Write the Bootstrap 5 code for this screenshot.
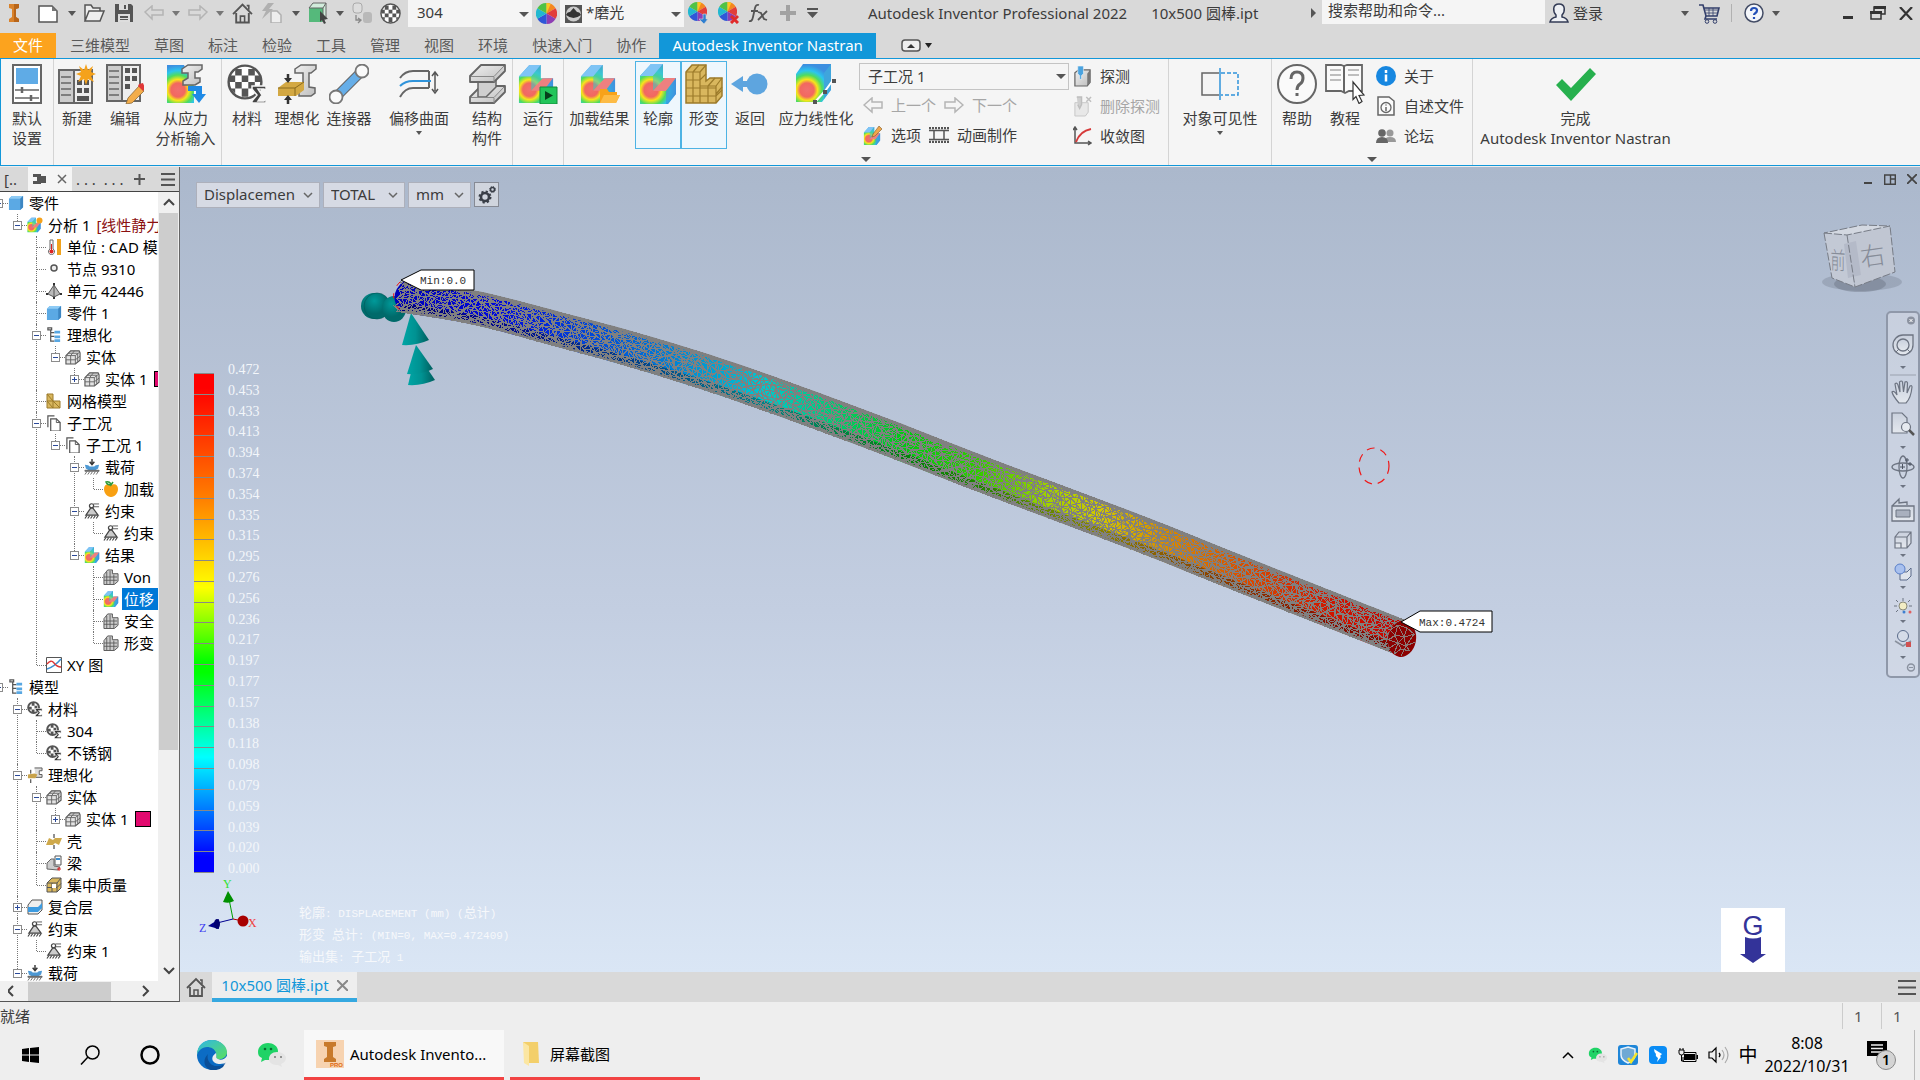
<!DOCTYPE html>
<html lang="zh-CN">
<head>
<meta charset="utf-8">
<meta name="viewport" content="width=device-width, initial-scale=1">
<title>Autodesk Inventor Professional 2022</title>
<link href="https://cdn.jsdelivr.net/npm/bootstrap@5.3.0/dist/css/bootstrap.min.css" rel="stylesheet">
<style>
:root{--accent:#1297d9;--chrome:#d9d9d9;--ink:#3c3c3c;--ui:"Noto Sans","Noto Sans CJK SC",sans-serif}
body{font-family:var(--ui);font-size:15px;line-height:20px;color:var(--ink);background:#eee;height:100vh;overflow:hidden}
button{font:inherit;color:inherit;background:none;border:0;padding:0}
select,input{font:inherit;color:inherit;appearance:none;border:0;background:none;border-radius:0;outline:0}
svg{display:block;flex:none}
a{color:inherit;text-decoration:none}
.cw16{width:16px}.cw28{width:28px}.cw32{width:32px}.cw36{width:36px}
.cell{display:flex;align-items:center;justify-content:center;flex:none;height:26px}
.caret{width:0;height:0;border:4px solid transparent;border-top:5px solid #555;border-bottom:0;flex:none}
.caret-r{width:0;height:0;border:5px solid transparent;border-left:5px solid #555;border-right:0}
.titlebar{height:33px;background:var(--chrome)}
.qbox{height:27px;width:124px;background:#f5f5f5;position:relative}
.qbox select{width:100%;height:100%;padding:0 22px 3px 9px}
.qbox .caret{position:absolute;right:3px;top:12px;border-width:5px 5px 0}
.qbox .ballpic{position:absolute;left:5px;top:5px}
.qbox .ballpic + select{padding-left:26px}
.search{height:24px;width:223px;background:#f5f5f5;padding:0 6px 4px}
.search::placeholder{color:var(--ink);opacity:1}
.tabs{height:25px;background:var(--chrome)}
.tabs a{color:#595959;height:25px;line-height:25px;margin-right:24px}
.tabs .filetab{background:#fca31e;color:#fff;width:56px;text-align:center;margin-right:14px}
.tabs .livetab{background:var(--accent);color:#fff;width:217px;text-align:center;margin:0 25px 0 -11px}
.ribbon{height:108px;background:#f5f5f5;border:1px solid var(--accent);border-right:0;flex:none}
.grp{border-right:1px solid #d4d4d4;position:relative;display:flex;flex:none}
.grp:last-child{border:0}
.big{display:flex;flex-direction:column;align-items:center;margin-top:2px;height:88px;border:1px solid transparent;padding-top:2px;text-align:center;white-space:nowrap;flex:none}
.big svg{height:40px;margin-bottom:4px}
.big .caret{margin-top:3px;border-width:4px 3px 0}
.big.on{border-color:#4db3e4;background:#eef7fd}
.bw46{width:46px}.bw50{width:50px}.bw52{width:52px}.bw54{width:54px}.bw71{width:71px}.bw86{width:86px}.bw102{width:102px}.bw197{width:197px}
.more{position:absolute;bottom:3px;left:50%;margin-left:-5px;border-width:5px 5px 0}
.stack{display:flex;flex-direction:column;padding-top:4px}
.stack.trio{padding-top:2px}
.tool{display:flex;align-items:center;gap:8px;height:30px;white-space:nowrap}
.tool.off,.off .tool{color:#a6a6a6}
.case{width:210px;height:27px;border:1px solid #c4c4c4;position:relative}
.case select{width:100%;height:25px;padding:0 20px 2px 8px}
.case .caret{position:absolute;right:2px;top:10px;border-width:5px 5px 0}
.main{flex:1 1 0;min-height:0;margin-top:1px}
.side{width:180px;border-right:1px solid #666;background:#f0f0f0;flex:none;display:flex;flex-direction:column;border-bottom:1px solid #555}
.sidehead{height:25px;background:var(--chrome);border-bottom:1px solid #444;flex:none;display:flex;align-items:center;overflow:hidden}
.sidehead .live{background:#f5f5f5;width:44px;height:24px;display:flex;align-items:center;justify-content:space-around}
.treebox{flex:1 1 0;min-height:0}
.treeview{width:158px;background:#fff;overflow:hidden;color:#000}
.tree,.tree ul{list-style:none;margin:0;padding:0}
.tree{margin-left:-11px;width:400px}
.tree ul{padding-left:19px}
.tree li{position:relative}
.tree li li::before{content:"";position:absolute;left:9px;top:0;bottom:0;border-left:1px dotted #777}
.tree li li:last-child::before{bottom:auto;height:11px}
.trow{display:flex;align-items:center;height:22px;position:relative;white-space:nowrap}
.trow::before{content:"";position:absolute;left:10px;width:9px;top:11px;border-top:1px dotted #777}
.trow > svg{margin:0 3px 0 19px}
.trow > span{padding:0 2px;line-height:22px}
.twist{position:absolute;left:5px;top:7px;width:9px;height:9px;border:1px solid #8c8c8c;background:#fff;z-index:1}
.twist::before,.twist.plus::after{content:"";position:absolute;left:1px;top:3px;width:5px;height:1px;background:#2b4a9a}
.twist.plus::after{left:3px;top:1px;width:1px;height:5px}
.trow > .picked{background:#0078d7;color:#fff;width:60px}
.trow > .kind{color:#8b1010;padding:0}
.swatch{width:16px;height:16px;background:#e20a6f;border:1px solid #000;margin-left:5px}
.vbar{width:21px;background:#f0f0f0;display:flex;flex-direction:column;align-items:center}
.vthumb{background:#cdcdcd;width:19px;flex:0 0 68%}
.hbar{height:20px;display:flex;align-items:center;width:158px;flex:none}
.hthumb{width:83px;height:19px;background:#cdcdcd}
.view{flex:1 1 0;min-height:0;position:relative;overflow:hidden;background:linear-gradient(#abb8cc,#c3cee1 55%,#dae6f5)}
.scene{position:absolute;left:0;top:0}
.serifmono{font-family:"Liberation Mono","Noto Sans CJK SC",monospace}
.picks{position:absolute;left:16px;top:15px;display:flex;gap:3px}
.pick{position:relative;height:26px;border:1px solid #adb0bb;background:#d6dae4}
.pick select{width:100%;height:24px;padding:0 18px 2px 7px}
.pick svg{position:absolute;right:6px;top:7px}
.pw124{width:124px}.pw82{width:82px}.pw63{width:63px}
.gearbtn{width:25px;height:25px;border:1px solid #868a94;background:#d0d5de;display:flex;align-items:center;justify-content:center}
.legend{position:absolute;left:14px;top:193px;display:flex;gap:14px}
.ramp{width:20px;height:500px;margin-top:13px;border-bottom:1px solid #888;background:repeating-linear-gradient(#888 0 1px,transparent 1px calc(100%/24)),linear-gradient(#f00 3%,#ff7e00 25%,#ff0 43%,#0f0 58%,#0f0 60%,#0ff 77%,#00f 97%)}
.legend ol{list-style:none;margin:0;padding:0;height:520px;display:flex;flex-direction:column;color:#f3f6fa;font:14px/20px "Liberation Serif",serif}
.legend li{flex:1}
.notes{position:absolute;left:119px;bottom:3px;color:#f6f8fb;font-size:11px;line-height:22px}
.notes b{font-weight:400;font-size:13px}
.notes p{margin:0;height:22px;white-space:pre}
.triad{position:absolute;left:15px;bottom:36px}
.gbox{position:absolute;right:135px;bottom:0}
.mdi{position:absolute;right:0;top:-1px;display:flex}
.vcube{position:absolute;right:8px;top:50px}
.navtools{position:absolute;right:0;top:144px;width:34px;height:367px;border:2px solid #8f98a9;border-radius:5px;background:rgba(214,218,230,.6);display:flex;flex-direction:column;align-items:center;padding-top:3px}
.navtools .caret{border-width:3px 3px 0;border-top-color:#6d7482}
.navtools .step{height:14px;display:flex;align-items:center}
.navtools .tight{height:11px}
.docbar{height:30px;background:var(--chrome);flex:none;display:flex}
.doctab{width:145px;background:#eee;border-bottom:4px solid #35a8e0;color:var(--accent);display:flex;align-items:center;justify-content:center;gap:8px}
.status{height:28px;flex:none;display:flex;align-items:center}
.status .num{width:39px;border-left:1px solid #ccc;height:26px;line-height:26px;padding-left:11px;color:#555}
.taskbar{height:50px;flex:none;display:flex;color:#000;white-space:nowrap}
.tcell{width:60px;display:flex;align-items:center;justify-content:center}
.task{display:flex;align-items:center;border-bottom:3px solid #f24343;gap:6px;padding:0 0 0 12px}
.task.front{background:#f8f8f8;width:200px}
.task.back{width:190px;gap:10px;margin-left:6px}
.tray{display:flex;align-items:center}
.tray .slot{width:30px;display:flex;justify-content:center}
.ime{font-size:19px}
.clock{width:88px;text-align:center;font-size:16px;line-height:23px}
.peek{width:18px;border-right:1px solid #bbb;margin-right:5px}
</style>
<script src="https://cdn.jsdelivr.net/npm/bootstrap@5.3.0/dist/js/bootstrap.bundle.min.js"></script>
</head>
<body class="d-flex flex-column">

<svg width="0" height="0" class="position-absolute" aria-hidden="true">
<defs>
<radialGradient id="heat" gradientUnits="userSpaceOnUse" cx="12" cy="26" r="25"><stop offset="0" stop-color="#f06f6f"/><stop offset=".28" stop-color="#f2685f"/><stop offset=".42" stop-color="#f7e51b"/><stop offset=".6" stop-color="#4fdc5e"/><stop offset=".78" stop-color="#2cc5ee"/><stop offset="1" stop-color="#3d8fe0"/></radialGradient>
<linearGradient id="steel" x1="0" y1="0" x2="1" y2="1"><stop offset="0" stop-color="#f1f1f1"/><stop offset="1" stop-color="#bdbdbd"/></linearGradient>
<linearGradient id="teal" x1="0" x2="1"><stop offset="0" stop-color="#00a5a5"/><stop offset=".5" stop-color="#009292"/><stop offset="1" stop-color="#005e5e"/></linearGradient>
<radialGradient id="tealball" cx=".4" cy=".3"><stop offset="0" stop-color="#009a9a"/><stop offset="1" stop-color="#006a6a"/></radialGradient>
<linearGradient id="glass" x1="0" y1="0" x2="0" y2="1"><stop offset="0" stop-color="#c9d0dd"/><stop offset="1" stop-color="#e4e8ee"/></linearGradient>
<linearGradient id="edgeA" x1="0" y1="0" x2="1" y2="1"><stop offset="0" stop-color="#2fb6e8"/><stop offset="1" stop-color="#5be05c"/></linearGradient>

<symbol id="fea" viewBox="0 0 38 40"><path d="M1 12 12 0H24V14H37V30L29 40H1Z" fill="url(#heat)"/><path d="M1 12 12 0H24L14 12Z" fill="#7fc4f5"/><path d="M14 12 24 0V16L14 27Z" fill="#43c8c0" opacity=".6"/><path d="M14 27 26 14H37L27 27Z" fill="#ee8080"/><path d="M27 27 37 14V30L29 40H27Z" fill="#3f93dc" opacity=".65"/></symbol>
<symbol id="ibeam" viewBox="0 0 38 40"><path d="M2 33 13 22H37V28L26 39H2Z" fill="url(#steel)" stroke="#666" stroke-width="1.800" stroke-linejoin="round"/><path d="M10 17 28 13V23L18 33H10Z" fill="#cfcfcf" stroke="#666" stroke-width="1.500"/><path d="M2 12 13 1H37V7L26 18H2Z" fill="url(#steel)" stroke="#666" stroke-width="1.800" stroke-linejoin="round"/><path d="M3 12.500H26L36 2M26 13V18M3 33.500H26L36 23M26 34V39" fill="none" stroke="#888"/></symbol>
<symbol id="ball" viewBox="0 0 22 22"><circle cx="11" cy="11" r="10" fill="#fff" stroke="#555" stroke-width="1.500"/><path d="M5 3h4v4H5zM13 3h4v4h-4zM9 7h4v4H9zM1.500 7H5v4H1.500zM17 7h4v4h-4zM5 11h4v4H5zM13 11h4v4h-4zM9 15h4v5H9zM2 15h3v3zM17 15h3l-3 3z" fill="#555"/></symbol>
<symbol id="material" viewBox="0 0 40 40"><use href="#ball" x="0" y="0" width="36" height="36"/><path d="M25 22h14v5l-2-2h-6l4 6-4 6h6l2-3v5H25v-2l5-6-5-6z" fill="#444" stroke="#f5f5f5" stroke-width="1.500"/></symbol>
<symbol id="mini-mat" viewBox="0 0 17 17"><circle cx="7" cy="7" r="5.800" fill="#fff" stroke="#555" stroke-width="2"/><path d="M5 2h3v3H5zM2 6h3v3H2zM8 5h3v3H8zM5 9h3v3H5z" fill="#555"/><path d="M9 8h7v3l-1-1h-3l2 2.500-2 2.500h3l1-1v2.500H9V15l3-2.500L9 9.500z" fill="#333" stroke="#fff" stroke-width=".6"/></symbol>
<symbol id="wheel" viewBox="-10 -10 20 20"><path d="M0 0V-10A10 10 0 0 1 8.700-5Z" fill="#f5871f"/><path d="M0 0 8.700-5A10 10 0 0 1 8.700 5Z" fill="#e23d3a"/><path d="M0 0 8.700 5A10 10 0 0 1 0 10Z" fill="#8e3db4"/><path d="M0 0V10A10 10 0 0 1-8.700 5Z" fill="#2f57d8"/><path d="M0 0-8.700 5A10 10 0 0 1-8.700-5Z" fill="#22b8d0"/><path d="M0 0-8.700-5A10 10 0 0 1 0-10Z" fill="#4fc244"/><path d="M0 0 4-9A10 10 0 0 0 0-10Z" fill="#f9c920"/></symbol>
<symbol id="home" viewBox="0 0 20 20"><path d="M1 11 10 2l9 9M4 10v9h12v-9" fill="none" stroke="#555" stroke-width="1.800"/><path d="M14 3h2v4M8 19v-6h4v6" fill="none" stroke="#555" stroke-width="1.500"/></symbol>
<symbol id="part" viewBox="0 0 17 17"><path d="M1 4 4 1h12v12l-3 3H1z" fill="#5ba9e4"/><path d="M1 4 4 1h12l-3 3z" fill="#8ecbf5"/><path d="m13 4 3-3v12l-3 3z" fill="#3d86c2"/></symbol>
<symbol id="mesh" viewBox="0 0 17 17"><path d="M1 7 6 2h9l1 2v8l-5 4H1z" fill="#e3e3e3" stroke="#555" stroke-width="1.200"/><path d="M1 7h10v9M1 11.500h10l5-4M6 7v9M11 7l5-4M3.500 4.500h10v9M6 7l4-5" fill="none" stroke="#666"/></symbol>
<symbol id="result" viewBox="0 0 17 17"><path d="M1 6 5 1h5v4h6v8l-4 3.500H1z" fill="#ccc" stroke="#555"/><path d="M1 8.500h14M1 12h14M4 3v13M7.500 2v14M11.500 6v10" stroke="#555" stroke-width=".9"/></symbol>
<symbol id="branch" viewBox="0 0 17 17"><path d="M2 1h4v2H2zM5 3v12h4M5 6h4M5 10h4" fill="none" stroke="#555" stroke-width="1.300"/><path d="M9 4h6v3H9zM9 9h6v3H9zM9 13h6v3H9z" fill="#58a7e2"/></symbol>
<symbol id="pages" viewBox="0 0 17 17"><path d="M2 13V1h7M5 4h6l4 4v9H5z" fill="#fff" stroke="#555" stroke-width="1.300"/><path d="M11 4v4h4" fill="none" stroke="#555"/></symbol>
<symbol id="load" viewBox="0 0 17 17"><path d="M8.500 0v5M6 3l2.500 3L11 3" fill="none" stroke="#333" stroke-width="1.500"/><path d="M1 6q4 0 5 2h5q1-2 5-2l-1 4-3 2H5l-3-2z" fill="#4c98d4"/><path d="M1 12h15v1H1zM1 16.500l2-3m1 3 2-3m1 3 2-3m1 3 2-3m1 3 2-3" stroke="#666" fill="#666"/></symbol>
<symbol id="fix" viewBox="0 0 17 17"><circle cx="8" cy="3" r="2.200" fill="#fff" stroke="#444" stroke-width="1.300"/><path d="M10 1h6M10 4h6" stroke="#555"/><path d="M7 5.500 2 13h13L9.500 5.500z" fill="#ccc" stroke="#444" stroke-width="1.300"/><path d="m1 16.500 2-3m1 3 2-3m1 3 2-3m1 3 2-3m1 3 2-3" stroke="#444" stroke-width="1.200"/></symbol>
<symbol id="ideal" viewBox="0 0 17 17"><path d="M8 1h8v3h-3v4h3v3H9" fill="#ddd" stroke="#555"/><path d="M1 8 8 7l3 1-2 4H1z" fill="#c8a24a"/><path d="M4 3v4M4 17v-4" stroke="#222"/></symbol>
<symbol id="doc" viewBox="0 0 20 20"><path d="M1 3h13l5 5v11H1z" fill="#fff" stroke="#555" stroke-width="1.500"/><path d="M14 3v5h5z" fill="#777"/></symbol>
<symbol id="wechat" viewBox="0 0 30 26"><path d="M11 1C5 1 1 5 1 10c0 3 1 5 4 6l-1 4 4-2h4c5 0 9-4 9-9s-5-8-10-8z" fill="#1fd366"/><path d="M20 10c-5 0-8 3-8 7 0 4 4 6 9 6l4 2-1-3c3-1 5-3 5-6 0-3-4-6-9-6z" fill="#e4e4e4"/><circle cx="8" cy="7" r="1.300" fill="#0a6a32"/><circle cx="14" cy="7" r="1.300" fill="#0a6a32"/><circle cx="18" cy="15" r="1" fill="#777"/><circle cx="24" cy="15" r="1" fill="#777"/></symbol>
<symbol id="chev" viewBox="0 0 10 10"><path d="m1 3 4 4 4-4" fill="none" stroke="#666" stroke-width="1.500"/></symbol>
<symbol id="probe" viewBox="0 0 20 22"><path d="M2 7 6 4h12v13l-3 4H2z" fill="url(#steel)" stroke="#666" stroke-width="1.300"/><path d="m15 8 3-4v13l-3 4z" fill="#777"/><path d="M5 0h6v8l-2 2v4H7v-4L5 8z" fill="#4aa3e0" stroke="#f5f5f5" stroke-width=".6"/></symbol>
</defs>
</svg>

<header class="titlebar d-flex align-items-start flex-shrink-0">
  <div class="cell cw28 me-1"><svg width="12" height="20" viewBox="0 0 12 20"><path d="M1 1h10v4L8 6v8l3 2v3H1v-3l3-2V6L1 5z" fill="#d9822b"/><path d="M8 6v8l3 2v3H6V1h5v4z" fill="#b8651a"/></svg></div>
  <button class="cell cw32" aria-label="新建"><svg width="20" height="20"><use href="#doc"/></svg></button><div class="cell cw16"><i class="caret"></i></div>
  <button class="cell cw28" aria-label="打开"><svg width="22" height="20" viewBox="0 0 22 20"><path d="M2 18V2h6l2 3h7v3M2 18 6 8h15l-4 10z" fill="#eee" stroke="#555" stroke-width="1.500"/></svg></button>
  <button class="cell cw32" aria-label="保存"><svg width="18" height="20" viewBox="0 0 18 20"><path d="M0 1h16l2 2v16H0z" fill="#555"/><path d="M4 1h9v6H4zM3 11h12v8H3z" fill="#ddd"/><path d="M9 2h2v4H9zM5 13h8v2H5zM5 16h8v1H5z" fill="#555"/></svg></button>
  <button class="cell cw28" aria-label="撤消"><svg width="20" height="16" viewBox="0 0 20 16"><path d="m1 7 7-6v4h11v5H8v4z" fill="none" stroke="#b4b4b4" stroke-width="1.500"/></svg></button><div class="cell cw16"><i class="caret opacity-75"></i></div>
  <button class="cell cw28" aria-label="重做"><svg width="20" height="16" viewBox="0 0 20 16"><path d="m19 7-7-6v4H1v5h11v4z" fill="none" stroke="#b4b4b4" stroke-width="1.500"/></svg></button><div class="cell cw16"><i class="caret opacity-75"></i></div>
  <button class="cell cw28" aria-label="主页"><svg width="21" height="22"><use href="#home"/></svg></button>
  <button class="cell cw32" aria-label="更新"><svg width="20" height="20" viewBox="0 0 20 20"><path d="M6 0h6L7 6h4L0 16 4 8H0z" fill="#b0b0b0"/><path d="M9 8h6l4 4v8H9z" fill="#eee" stroke="#b0b0b0" stroke-width="1.500"/></svg></button><div class="cell cw16"><i class="caret"></i></div>
  <button class="cell cw28" aria-label="选择"><svg width="21" height="22" viewBox="0 0 21 22"><path d="m1 6 4-5h13v14l-4 5H1z" fill="#55b97b"/><path d="m1 6 4-5h13l-3 5zM15 6v14l3-4V1" fill="#d2ecdc" stroke="#666"/><path d="m12 9 8 8-4 .5 2 3.500-2 1-2-4-2 2z" fill="#444"/></svg></button><div class="cell cw16"><i class="caret"></i></div>
  <div class="cell cw28"><svg width="20" height="22" viewBox="0 0 20 22"><rect x="1" y="1" width="9" height="10" rx="3" fill="#ddd" stroke="#aaa"/><rect x="11" y="10" width="9" height="11" rx="3" fill="#b9b9b9"/><path d="M4 13v5h4M6 16l3 2-3 3" fill="none" stroke="#888" stroke-width="1.300"/></svg></div>
  <div class="cell cw28"><svg width="21" height="21"><use href="#ball"/></svg></div>
  <div class="qbox ms-1"><select aria-label="材料"><option>304</option></select><i class="caret"></i></div>
  <div class="cell cw28"><svg width="21" height="21"><use href="#wheel"/></svg></div>
  <div class="qbox"><svg class="ballpic" width="17" height="18" viewBox="0 0 17 18"><path d="M0 0h17v18H0z" fill="#555"/><circle cx="8.500" cy="9" r="7.500" fill="#ccc"/><path d="M1 10q1-3 4-3l3.500-4L12 7q3 0 4 3-4 3-7.500 3T1 10z" fill="#333"/></svg><select aria-label="外观"><option>*磨光</option></select><i class="caret"></i></div>
  <div class="cell cw28"><svg width="21" height="22" viewBox="0 0 21 22"><use href="#wheel" width="19" height="19"/><path d="M11 17h4v-5h3v5h2l-4 5z" fill="#2f7fd0" stroke="#d9d9d9" stroke-width=".6"/></svg></div>
  <div class="cell cw32"><svg width="21" height="22" viewBox="0 0 21 22"><use href="#wheel" width="19" height="19"/><path d="m13 14 7 7m0-7-7 7" stroke="#e02a2a" stroke-width="3"/></svg></div>
  <div class="cell cw28"><svg width="22" height="20" viewBox="0 0 22 20"><path d="M2 18q3 1 4-4l2-9q1-4 4-3M4 8h7" fill="none" stroke="#555" stroke-width="1.800"/><path d="m11 9 3 1 3 6 3 1M20 8l-9 9" fill="none" stroke="#555" stroke-width="1.800"/></svg></div>
  <div class="cell cw32"><svg width="16" height="16" viewBox="0 0 16 16"><path d="M6 0h4v6h6v4h-6v6H6v-6H0V6h6z" fill="#a2a2a2"/></svg></div>
  <div class="cell cw16"><svg width="11" height="10" viewBox="0 0 11 10"><path d="M0 0h11v2H0zM0 4h11L5.500 10z" fill="#555"/></svg></div>
  <div class="d-flex ms-5 cell gap-4"><span>Autodesk Inventor Professional 2022</span><span>10x500 圆棒.ipt</span></div>
  <div class="d-flex ms-auto align-items-start">
    <div class="cell cw16"><i class="caret-r"></i></div>
    <input class="search" type="text" aria-label="搜索" placeholder="搜索帮助和命令...">
    <div class="cell cw28"><svg width="20" height="20" viewBox="0 0 20 20"><path d="M10 1c7 0 6 8 3 11v2q5 1 6 5H1q1-4 6-5v-2C4 9 3 1 10 1z" fill="#eef0f4" stroke="#333b55" stroke-width="1.500"/></svg></div>
    <button class="cell me-5">登录</button>
    <div class="cell cw36 ms-2"><i class="caret ms-3"></i></div>
    <div class="cell cw28"><svg width="21" height="21" viewBox="0 0 21 21"><path d="M0 2h4l3 11h11l2-8H5M7 13l-1 3h12" fill="none" stroke="#333f6b" stroke-width="1.600"/><path d="M6 7h13M7 10h12M10 5v8M14 5v8" stroke="#333f6b" stroke-width=".8"/><circle cx="8" cy="18.500" r="1.800" fill="none" stroke="#333f6b"/><circle cx="16" cy="18.500" r="1.800" fill="none" stroke="#333f6b"/></svg></div>
    <div class="vr my-1 mx-2"></div>
    <button class="cell cw28" aria-label="帮助"><svg width="20" height="20" viewBox="0 0 20 20"><circle cx="10" cy="10" r="9" fill="#f4f6fa" stroke="#444d66" stroke-width="1.500"/><path d="M7 8q0-3 3-3t3 2.500q0 1.500-1.500 2.500T10 12M10 14v2" fill="none" stroke="#2450b8" stroke-width="2.200"/></svg></button>
    <div class="cell cw16 me-5"><i class="caret"></i></div>
    <button class="cell cw32" aria-label="最小化"><svg width="10" height="12"><path d="M0 9h10v3H0z" fill="#333"/></svg></button>
    <button class="cell cw28" aria-label="还原"><svg width="16" height="14" viewBox="0 0 16 14"><path d="M4 5V1h11v7h-4M1 6h10v7H1z" fill="none" stroke="#333" stroke-width="1.500"/><path d="M4 0h12v3H4zM0 5h12v3H0z" fill="#333"/></svg></button>
    <button class="cell cw28" aria-label="关闭"><svg width="14" height="13" viewBox="0 0 14 13"><path d="m1 0 12 13M13 0 1 13" stroke="#333" stroke-width="2.200"/></svg></button>
  </div>
</header>

<nav class="tabs d-flex flex-shrink-0">
  <a href="#" class="filetab">文件</a><a href="#">三维模型</a><a href="#">草图</a><a href="#">标注</a><a href="#">检验</a><a href="#">工具</a><a href="#">管理</a><a href="#">视图</a><a href="#">环境</a><a href="#">快速入门</a><a href="#">协作</a><a href="#" class="livetab">Autodesk Inventor Nastran</a>
  <button class="d-flex align-items-center gap-1" aria-label="功能区选项"><svg width="20" height="13" viewBox="0 0 20 13"><rect x="1" y="1" width="18" height="11" rx="3" fill="#eee" stroke="#555" stroke-width="1.500"/><path d="m6 9 4-4 4 4z" fill="#333"/></svg><svg width="8" height="5"><path d="M0 0h7L3.500 5z" fill="#222"/></svg></button>
</nav>

<section class="ribbon d-flex">
  <div class="grp">
    <button class="big bw52"><svg width="30" viewBox="0 0 30 40"><path d="M1 1h28v38H1z" fill="#fff" stroke="#666" stroke-width="2"/><path d="M4 4h22v16H4z" fill="#5fabe6"/><path d="M3 26h24M3 34h24" stroke="#666" stroke-width="1.500"/><path d="M10 23v6M19 31v6" stroke="#666" stroke-width="2.500"/></svg>默认<br>设置</button>
  </div>
  <div class="grp">
    <button class="big bw46"><svg width="38" viewBox="0 0 38 40"><path d="M1 6h15v33H1z" fill="#ccc" stroke="#666" stroke-width="2"/><path d="M16 6h18v33H16z" fill="#eee" stroke="#666" stroke-width="2"/><path d="M3 13h10M3 19h10M3 25h10M3 31h10" stroke="#666" stroke-width="1.500"/><path d="M19 16h5v5h-5zM26 16h5v5h-5zM19 24h5v5h-5zM26 24h5v5h-5zM19 32h12v5H19z" fill="#555"/><path d="m28 0 2 6 5-4-2 6 5 2-5 2 3 6-6-3-2 6-2-6-6 3 3-6-5-2 5-2-2-6 5 4z" fill="#f5a21c"/></svg>新建</button>
    <button class="big bw50"><svg width="38" viewBox="0 0 38 40"><path d="M1 1h15v36H1z" fill="#ccc" stroke="#666" stroke-width="2"/><path d="M16 1h18v36H16z" fill="#eee" stroke="#666" stroke-width="2"/><path d="M3 7h10M3 13h10M3 19h10M3 25h10M3 31h10" stroke="#666" stroke-width="1.500"/><path d="M19 4h5v5h-5zM26 4h5v5h-5zM19 12h5v5h-5zM26 12h5v5h-5zM19 20h5v5h-5z" fill="#555"/><path d="m33 22 5 5-12 12-6 1 2-6z" fill="#f3ad4a" stroke="#8a6a3a" stroke-width=".8"/><path d="m33 20 4-1 2 5-2 3-5-5z" fill="#e03838"/></svg>编辑</button>
    <button class="big bw71"><svg width="40" viewBox="0 0 40 40"><path d="M1 1H18L28 22V39H1Z" fill="url(#heat)"/><path d="M16 5 22 1h14v4l-4 3h-3v6h5v4l-5 3H17v-4l5-3V9h-6z" fill="url(#steel)" stroke="#666" stroke-width="1.500"/><path d="M22 22h14v8h4l-7 9-7-9h4v-3h-8z" fill="#1e8ae6"/></svg>从应力<br>分析输入</button>
  </div>
  <div class="grp">
    <button class="big bw50"><svg width="40"><use href="#material"/></svg>材料</button>
    <button class="big bw50"><svg width="40" viewBox="0 0 40 40"><path d="M18 5 24 1h15v4l-5 4h-2v14l6 1v5l-4 3H22v-4l4-3V9h-8z" fill="url(#steel)" stroke="#666" stroke-width="1.500"/><path d="m1 24 8-6h18v8l-8 6H1z" fill="#d3a843"/><path d="M1 24h17l9-6M18 24v8" fill="none" stroke="#8a6a1e"/><path d="M11 10v7M11 40v-7" stroke="#333" stroke-width="2.500"/><path d="m7 14 4 5 4-5zM7 36l4-5 4 5z" fill="#333"/></svg>理想化</button>
    <button class="big bw54"><svg width="40" viewBox="0 0 40 40"><path d="M7 33 33 7" stroke="#666" stroke-width="10"/><path d="M7 33 33 7" stroke="#66aee8" stroke-width="8"/><circle cx="33" cy="7" r="6.500" fill="#fafafa" stroke="#777" stroke-width="1.800"/><circle cx="7" cy="33" r="6.500" fill="#fafafa" stroke="#777" stroke-width="1.800"/></svg>连接器</button>
    <button class="big bw86"><svg width="40" viewBox="0 0 40 40"><path d="M1 14Q6 7 14 7H30M1 33Q6 24 14 24H30M30 7V24" fill="none" stroke="#666" stroke-width="2"/><path d="M1 22Q6 17 14 17H32" fill="none" stroke="#2f93da" stroke-width="2"/><path d="M36 9v18M33 12l3-4 3 4M33 25l3 4 3-4" fill="none" stroke="#555" stroke-width="1.500"/></svg>偏移曲面<i class="caret"></i></button>
    <button class="big bw50"><svg width="38"><use href="#ibeam"/></svg>结构<br>构件</button>
  </div>
  <div class="grp">
    <button class="big bw50"><svg width="40" viewBox="0 0 40 40"><use href="#fea" width="36" height="40"/><path d="M22 23h17v17H22z" fill="#22c55a" stroke="#138a3b"/><path d="m27 27 8 4.500-8 4.500z" fill="#06401b"/></svg>运行</button>
  </div>
  <div class="grp">
    <button class="big bw71"><svg width="40" viewBox="0 0 40 40"><use href="#fea" width="36" height="40"/><path d="M20 39V25h7l2 3h8v3h3l-4 8z" fill="#f7a21a"/><path d="M20 39l4-8h16l-4 8z" fill="#fdbb45"/></svg>加载结果</button>
    <button class="big bw46 on"><svg width="40"><use href="#fea"/></svg>轮廓</button>
    <button class="big bw46 on"><svg width="38" viewBox="0 0 38 40"><path d="M1 8 7 1h14v16l4-3h12v18l-6 7H1z" fill="#d9b75e" stroke="#9c7b2a" stroke-width="1.500"/><path d="M1 8h14v31M15 8l6-7M1 16h14l6-6M1 24h30M1 32h30l6-6M8 8v31M23 22v17M15 22h16v17M31 22l6-8M31 30l6-7M8 8l6-7M23 22l7-8" fill="none" stroke="#9c7b2a" stroke-width="1.200"/></svg>形变</button>
    <button class="big bw46"><svg width="38" viewBox="0 0 38 40"><circle cx="26" cy="20" r="10.500" fill="#5ea5df"/><path d="M18 17v6h-6v5L0 20l12-8v5z" fill="#5ea5df"/></svg>返回</button>
    <button class="big bw86"><svg width="42" viewBox="0 0 42 40"><path d="M1 10 8 0h28v26l-9 12H1z" fill="url(#heat)"/><path d="M29 9 36 0v25l-7 10z" fill="#3fa5dc"/><path d="M20 38 30 27l8-11" fill="none" stroke="#fff" stroke-width="2"/><path d="M18 36h4v4h-4zM28 26h4v4h-4zM37 15h4v4h-4z" fill="#555"/></svg>应力线性化</button>
    <div class="stack me-1">
      <div class="case"><select aria-label="子工况"><option>子工况 1</option></select><i class="caret"></i></div>
      <div class="d-flex gap-2 off ps-1">
        <button class="tool"><svg width="20" height="17" viewBox="0 0 20 17"><path d="m1 8 8-7v4h10v6H9v4z" fill="none" stroke="#b5b5b5" stroke-width="1.500"/></svg>上一个</button>
        <button class="tool"><svg width="20" height="17" viewBox="0 0 20 17"><path d="m19 8-8-7v4H1v6h10v4z" fill="none" stroke="#b5b5b5" stroke-width="1.500"/></svg>下一个</button>
      </div>
      <div class="d-flex gap-2 ps-1">
        <button class="tool"><svg width="20" height="20" viewBox="0 0 20 20"><use href="#fea" y="2" width="18" height="18"/><path d="m16 1 3 3-7 7-3 1 1-3z" fill="#f0a64a" stroke="#7c5a2a" stroke-width=".6"/></svg>选项</button>
        <button class="tool"><svg width="20" height="16" viewBox="0 0 20 16"><path d="M0 1h20M0 15h20" stroke="#555" stroke-width="2.500" stroke-dasharray="2 1"/><path d="M0 3.500h20M0 12.500h20M5 3v10M15 3v10" stroke="#555" stroke-width="1.500"/></svg>动画制作</button>
      </div>
      <i class="caret more"></i>
    </div>
    <div class="stack trio pe-2">
      <button class="tool"><svg width="19" height="21"><use href="#probe"/></svg>探测</button>
      <button class="tool off"><svg width="19" height="21" class="opacity-50" viewBox="0 0 20 22"><path d="M2 7h14v10l-3 4H2z" fill="#ddd" stroke="#999"/><path d="M4 1h5v8L7 13 5 9M14 1l5 5m0-5-5 5" stroke="#888" stroke-width="1.500" fill="#aaa"/></svg>删除探测</button>
      <button class="tool"><svg width="19" height="20" viewBox="0 0 19 20"><path d="M2 1v16h16M0 4l2-3 2 3M15 15l3 2-3 2" fill="none" stroke="#555" stroke-width="1.500"/><path d="M3 16Q7 5 18 3" fill="none" stroke="#d63a3a" stroke-width="2"/></svg>收敛图</button>
    </div>
  </div>
  <div class="grp">
    <button class="big bw102"><svg width="38" viewBox="0 0 38 40"><path d="M18 9H1v22h17" fill="none" stroke="#666" stroke-width="1.500"/><path d="M19 4v32" stroke="#2f93da" stroke-width="1.500"/><path d="M20 9h17v22H20" fill="none" stroke="#2f93da" stroke-width="1.500" stroke-dasharray="4 2"/></svg>对象可见性<i class="caret"></i></button>
  </div>
  <div class="grp">
    <button class="big bw50"><svg width="40" viewBox="0 0 40 40"><circle cx="20" cy="20" r="19" fill="#fafafa" stroke="#666" stroke-width="2"/><path d="M14 15q0-7 6-7t6 6q0 4-3 6t-3 6M20 29v3" fill="none" stroke="#666" stroke-width="3"/></svg>帮助</button>
    <button class="big bw46"><svg width="40" viewBox="0 0 40 40"><path d="M1 1h15l3 1 3-1h15v26H24l-4 2-4-2H1z" fill="#fafafa" stroke="#666" stroke-width="1.800"/><path d="M19 2v26" stroke="#666" stroke-width="2"/><path d="M5 6h11M5 11h11M5 16h11M23 6h11M23 11h11" stroke="#aaa" stroke-width="1.500"/><path d="m28 18 11 13-5 .5 3 6-3 2-3-7-3 3z" fill="#fff" stroke="#333" stroke-width="1.200"/></svg>教程</button>
    <div class="stack trio ms-2 pe-2">
      <button class="tool"><svg width="20" height="20" viewBox="0 0 20 20"><circle cx="10" cy="10" r="10" fill="#1787e0"/><path d="M10 4v3M10 8.500v7" stroke="#fff" stroke-width="2.500"/></svg>关于</button>
      <button class="tool"><svg width="20" height="20" viewBox="0 0 20 20"><path d="M2 1h11l5 4v14H2z" fill="#fafafa" stroke="#666" stroke-width="1.500"/><circle cx="10" cy="11.500" r="5" fill="none" stroke="#666" stroke-width="1.300"/><path d="M10 8.500v1M10 11v4" stroke="#666" stroke-width="1.500"/></svg>自述文件</button>
      <button class="tool"><svg width="20" height="14" viewBox="0 0 20 14"><circle cx="14" cy="4" r="3.500" fill="#999"/><path d="M8 13q0-5 6-5t6 5z" fill="#999"/><circle cx="6" cy="4" r="3.800" fill="#666"/><path d="M0 14q0-6 6-6t6 6z" fill="#666"/></svg>论坛</button>
    </div>
    <i class="caret more"></i>
  </div>
  <div class="grp">
    <button class="big bw197 ms-1"><svg width="40" viewBox="0 0 40 40"><path d="m0 21 6-6 9 9L34 4l6 6-25 27z" fill="#27b04e"/></svg>完成<br>Autodesk Inventor Nastran</button>
  </div>
</section>

<main class="main d-flex">
  <aside class="side">
    <div class="sidehead"><span class="cw28 px-1">[..</span><div class="live"><svg width="14" height="12" viewBox="0 0 14 12"><path d="M0 1h8v2h5v7H8v1H0V8h4V4H0z" fill="#555"/></svg><svg width="10" height="10" viewBox="0 0 10 10"><path d="m1 1 8 8m0-8-8 8" stroke="#666" stroke-width="1.500"/></svg></div><span class="ms-1">. . . &nbsp;. . .</span><svg class="ms-auto" width="11" height="11"><path d="M0 5h11M5.500 0v11" stroke="#555" stroke-width="2"/></svg><svg class="ms-3 me-1" width="14" height="13"><path d="M0 1h14M0 6.500h14M0 12h14" stroke="#555" stroke-width="2"/></svg></div>
    <div class="treebox d-flex">
      <div class="treeview">
        <ul class="tree">
          <li><div class="trow"><button class="twist" aria-label="折叠"></button><svg width="16" height="16"><use href="#part"/></svg><span>零件</span></div>
            <ul><li><div class="trow"><button class="twist" aria-label="折叠"></button><svg width="16" height="16" viewBox="0 0 16 16"><use href="#fea" width="14" height="16"/><circle cx="12.500" cy="3.500" r="3" fill="#f5a21c"/></svg><span>分析 1</span><span class="kind">&nbsp;[线性静力</span></div>
              <ul>
                <li><div class="trow"><svg width="16" height="16" viewBox="0 0 16 16"><path d="M4 1h3v9a3 3 0 1 1-3 0z" fill="#fff" stroke="#666"/><circle cx="5.500" cy="12.500" r="2" fill="#d22"/><path d="M5 5h1v7H5z" fill="#d22"/><path d="M11 0h4v16h-4z" fill="#f0a21c"/></svg><span>单位 : CAD 模</span></div></li>
                <li><div class="trow"><svg width="16" height="16"><circle cx="8" cy="7" r="3" fill="#eee" stroke="#555" stroke-width="1.500"/></svg><span>节点 9310</span></div></li>
                <li><div class="trow"><svg width="16" height="16" viewBox="0 0 16 16"><path d="M8 2 2 11l6 3 6-3z" fill="#bbb" stroke="#555"/><path d="M8 2v12" stroke="#555"/><path d="M7 0h2v2H7zM0 10h2v2H0zM14 10h2v2h-2zM7 14h2v2H7z" fill="#333"/></svg><span>单元 42446</span></div></li>
                <li><div class="trow"><svg width="16" height="16"><use href="#part"/></svg><span>零件 1</span></div></li>
                <li><div class="trow"><button class="twist" aria-label="折叠"></button><svg width="16" height="16"><use href="#branch"/></svg><span>理想化</span></div>
                  <ul><li><div class="trow"><button class="twist" aria-label="折叠"></button><svg width="16" height="16"><use href="#mesh"/></svg><span>实体</span></div>
                    <ul><li><div class="trow"><button class="twist plus" aria-label="展开"></button><svg width="16" height="16"><use href="#mesh"/></svg><span>实体 1</span><i class="swatch"></i></div></li></ul></li></ul></li>
                <li><div class="trow"><svg width="16" height="16" viewBox="0 0 16 16"><path d="M1 1h6v7h7v7H1z" fill="#d9b75e" stroke="#9c7b2a"/><path d="m1 1 6 7H1l6 7V8l7 7" fill="none" stroke="#9c7b2a"/></svg><span>网格模型</span></div></li>
                <li><div class="trow"><button class="twist" aria-label="折叠"></button><svg width="16" height="16"><use href="#pages"/></svg><span>子工况</span></div>
                  <ul><li><div class="trow"><button class="twist" aria-label="折叠"></button><svg width="16" height="16"><use href="#pages"/></svg><span>子工况 1</span></div>
                    <ul>
                      <li><div class="trow"><button class="twist" aria-label="折叠"></button><svg width="16" height="16"><use href="#load"/></svg><span>载荷</span></div>
                        <ul><li><div class="trow"><svg width="16" height="16" viewBox="0 0 16 16"><path d="M8 4c4-2 7 0 7 4s-3 8-7 8-7-4-7-8 3-6 7-4z" fill="#f8a012"/><path d="M8 4Q4 4 3 1q4-1 5 3l2-3" fill="none" stroke="#2f9a3a" stroke-width="1.500"/></svg><span>加载</span></div></li></ul></li>
                      <li><div class="trow"><button class="twist" aria-label="折叠"></button><svg width="16" height="16"><use href="#fix"/></svg><span>约束</span></div>
                        <ul><li><div class="trow"><svg width="16" height="16"><use href="#fix"/></svg><span>约束</span></div></li></ul></li>
                      <li><div class="trow"><button class="twist" aria-label="折叠"></button><svg width="16" height="16"><use href="#fea"/></svg><span>结果</span></div>
                        <ul>
                          <li><div class="trow"><svg width="16" height="16"><use href="#result"/></svg><span>Von</span></div></li>
                          <li><div class="trow"><svg width="16" height="16"><use href="#fea"/></svg><span class="picked">位移</span></div></li>
                          <li><div class="trow"><svg width="16" height="16"><use href="#result"/></svg><span>安全</span></div></li>
                          <li><div class="trow"><svg width="16" height="16"><use href="#result"/></svg><span>形变</span></div></li>
                        </ul></li>
                    </ul></li></ul></li>
                <li><div class="trow"><svg width="16" height="16" viewBox="0 0 16 16"><path d="M.5.500h15v15H.5z" fill="#fff" stroke="#555"/><path d="M1 12Q8 10 15 2" fill="none" stroke="#3d8fd0" stroke-width="1.500"/><path d="M1 7q4-5 7-1t7 4" fill="none" stroke="#d33" stroke-width="1.300"/></svg><span>XY 图</span></div></li>
              </ul></li></ul></li>
          <li><div class="trow"><button class="twist" aria-label="折叠"></button><svg width="16" height="16"><use href="#branch"/></svg><span>模型</span></div>
            <ul>
              <li><div class="trow"><button class="twist" aria-label="折叠"></button><svg width="16" height="16"><use href="#mini-mat"/></svg><span>材料</span></div>
                <ul><li><div class="trow"><svg width="16" height="16"><use href="#mini-mat"/></svg><span>304</span></div></li><li><div class="trow"><svg width="16" height="16"><use href="#mini-mat"/></svg><span>不锈钢</span></div></li></ul></li>
              <li><div class="trow"><button class="twist" aria-label="折叠"></button><svg width="16" height="16"><use href="#ideal"/></svg><span>理想化</span></div>
                <ul>
                  <li><div class="trow"><button class="twist" aria-label="折叠"></button><svg width="16" height="16"><use href="#mesh"/></svg><span>实体</span></div>
                    <ul><li><div class="trow"><button class="twist plus" aria-label="展开"></button><svg width="16" height="16"><use href="#mesh"/></svg><span>实体 1</span><i class="swatch"></i></div></li></ul></li>
                  <li><div class="trow"><svg width="16" height="16" viewBox="0 0 16 16"><path d="m0 12 3-7 4 2 2-2h7l-3 7-4-2-2 2z" fill="#cfa94b"/><path d="M8 1v4M8 12v4" stroke="#222"/></svg><span>壳</span></div></li>
                  <li><div class="trow"><svg width="16" height="16" viewBox="0 0 16 16"><path d="M1 14V8l4-4h3v7l6 1-2 3z" fill="#ccc" stroke="#666"/><path d="M9 1h6v9H9z" fill="#fff" stroke="#555"/><path d="M10 3h4v2h-4z" fill="#3d8fd0"/><path d="M13 12v4M11 14h4" stroke="#d22"/></svg><span>梁</span></div></li>
                  <li><div class="trow"><svg width="16" height="16" viewBox="0 0 16 16"><path d="M1 6 6 1h9v10l-4 4H1z" fill="#d9b75e" stroke="#555"/><path d="M1 6h10v9M1 10.500h10l4-4M6 6v9M11 6l4-5" fill="none" stroke="#555"/><path d="M6 7h4v4H6z" fill="#fff"/></svg><span>集中质量</span></div></li>
                </ul></li>
              <li><div class="trow"><button class="twist plus" aria-label="展开"></button><svg width="16" height="16" viewBox="0 0 16 16"><path d="m1 6 4-5h10v10l-4 4H1z" fill="#eee" stroke="#555"/><path d="M1 8h10l4-4v5l-4 4H1z" fill="#3d9be0"/></svg><span>复合层</span></div></li>
              <li><div class="trow"><button class="twist" aria-label="折叠"></button><svg width="16" height="16"><use href="#fix"/></svg><span>约束</span></div>
                <ul><li><div class="trow"><svg width="16" height="16"><use href="#fix"/></svg><span>约束 1</span></div></li></ul></li>
              <li><div class="trow"><button class="twist" aria-label="折叠"></button><svg width="16" height="16"><use href="#load"/></svg><span>载荷</span></div></li>
            </ul></li>
        </ul>
      </div>
      <div class="vbar"><svg class="my-1" width="12" height="13" viewBox="0 0 12 13"><path d="m1 9 5-5 5 5" fill="none" stroke="#444" stroke-width="2"/></svg><div class="vthumb"></div><svg class="mt-auto mb-1" width="12" height="13" viewBox="0 0 12 13"><path d="m1 4 5 5 5-5" fill="none" stroke="#444" stroke-width="2"/></svg></div>
    </div>
    <div class="hbar"><svg class="mx-2" width="12" height="12" viewBox="0 0 12 12"><path d="M5 1 0 6l5 5" fill="none" stroke="#444" stroke-width="2"/></svg><div class="hthumb"></div><svg class="ms-auto me-1" width="12" height="12" viewBox="0 0 12 12"><path d="m1 1 5 5-5 5" fill="none" stroke="#444" stroke-width="2"/></svg></div>
  </aside>

  <div class="d-flex flex-column flex-grow-1">
    <div class="view">
      <svg class="scene" width="1740" height="805" viewBox="180 167 1740 805">
        <defs><linearGradient id="disp" gradientUnits="userSpaceOnUse" x1="395" x2="1415" y1="0" y2="0">
          <stop offset="0" stop-color="#0000b8"/><stop offset=".1" stop-color="#0008dc"/><stop offset=".24" stop-color="#0068d8"/><stop offset=".36" stop-color="#00c8d0"/><stop offset=".42" stop-color="#00cc80"/><stop offset=".5" stop-color="#00cc10"/><stop offset=".57" stop-color="#30cc00"/><stop offset=".64" stop-color="#a0d000"/><stop offset=".69" stop-color="#d0c800"/><stop offset=".76" stop-color="#d88800"/><stop offset=".84" stop-color="#d84800"/><stop offset=".92" stop-color="#d01400"/><stop offset="1" stop-color="#c00000"/></linearGradient></defs>
        <g stroke="none"><circle cx="374" cy="306" r="13" fill="url(#tealball)"/><circle cx="377" cy="306" r="13" fill="url(#tealball)" stroke="#005858" stroke-width=".6"/><ellipse cx="394" cy="309" rx="12" ry="13" fill="url(#tealball)"/>
        <path d="m416 352-8 33q14 1 27-5z" fill="url(#teal)"/><path d="m416 345-9 29q14 1 26-5z" fill="url(#teal)"/><path d="m411 313-9 32q14 1 27-5z" fill="url(#teal)"/></g>
        <path id="rod" fill="url(#disp)"/><path id="shade" fill="none" stroke="#000" stroke-opacity=".35" stroke-width="9"/>
        <path id="net" fill="none" stroke="#808080" shape-rendering="crispEdges"/>
        <path id="rimTop" fill="none" stroke="#808080" stroke-width="3"/><path id="rimBot" fill="none" stroke="#808080" stroke-width="2"/>
        <ellipse cx="1402" cy="639" rx="14" ry="18" transform="rotate(10 1402 639)" fill="#8c0000"/>
        <path d="m1390 630 8-5 9 3 7 6M1388 640l8-5 8 2 11-3M1389 648l9-5 8 3 9-4M1394 654l7-5 9 2M1398 625l-3 10 3 8-4 11M1407 628l-3 9 2 9-5 10M1390 630l5 5-6 5 9 3M1414 634l-8 12 4 5M1398 625l6 12-6 6 3 6" fill="none" stroke="#8a7a78" shape-rendering="crispEdges"/>
        <path d="M400 282q-8 8-6 18 2 8 8 11" fill="none" stroke="#f01010" stroke-dasharray="5 8"/>
        <path d="m401 280 20-10h53v20h-53z" fill="#fff" stroke="#000" stroke-width="1"/>
        <text class="serifmono" x="420" y="284" font-size="11" fill="#333">Min:0.0</text>
        <path d="m1401 622 19-11h72v21h-72z" fill="#fff" stroke="#000" stroke-width="1"/>
        <text class="serifmono" x="1419" y="626" font-size="11" fill="#333">Max:0.4724</text>
        <ellipse cx="1374" cy="466" rx="15" ry="18" fill="none" stroke="#f01818" stroke-width="1.200" stroke-dasharray="8 6"/>
      </svg>
      <div class="picks">
        <div class="pick pw124"><select aria-label="结果数据"><option>Displacemen</option></select><svg width="10" height="10"><use href="#chev"/></svg></div>
        <div class="pick pw82"><select aria-label="类型"><option>TOTAL</option></select><svg width="10" height="10"><use href="#chev"/></svg></div>
        <div class="pick pw63"><select aria-label="单位"><option>mm</option></select><svg width="10" height="10"><use href="#chev"/></svg></div>
        <button class="gearbtn" aria-label="选项"><svg width="18" height="18" viewBox="0 0 18 18"><circle cx="7" cy="11" r="4" fill="none" stroke="#3a3f48" stroke-width="2.600"/><circle cx="7" cy="11" r="5.500" fill="none" stroke="#3a3f48" stroke-width="2" stroke-dasharray="2.200 2.120"/><circle cx="14.500" cy="3.500" r="2" fill="none" stroke="#3a3f48" stroke-width="1.500"/><circle cx="14.500" cy="3.500" r="3" fill="none" stroke="#3a3f48" stroke-dasharray="1.200 1.156"/></svg></button>
      </div>
      <div class="legend"><div class="ramp"></div><ol><li>0.472</li><li>0.453</li><li>0.433</li><li>0.413</li><li>0.394</li><li>0.374</li><li>0.354</li><li>0.335</li><li>0.315</li><li>0.295</li><li>0.276</li><li>0.256</li><li>0.236</li><li>0.217</li><li>0.197</li><li>0.177</li><li>0.157</li><li>0.138</li><li>0.118</li><li>0.098</li><li>0.079</li><li>0.059</li><li>0.039</li><li>0.020</li><li>0.000</li></ol></div>
      <svg class="triad" width="70" height="62" viewBox="195 874 70 62"><path d="m233 919-4-20" stroke="#00a000"/><path d="m233 919-20 5" stroke="#000090"/><path d="m233 919 10 2" stroke="#b00000"/><path d="m228 891-5 11q6 2 11-1z" fill="#009000"/><path d="m208 926 11-7v10z" fill="#00008b"/><ellipse cx="217" cy="924" rx="3" ry="5" fill="#000070"/><circle cx="243" cy="921" r="5.500" fill="#a80000"/><g font-family="Liberation Serif" font-size="12"><text x="223" y="888" fill="#30e030">Y</text><text x="199" y="932" fill="#4040f0">Z</text><text x="248" y="927" fill="#f04040">X</text></g></svg>
      <div class="notes serifmono"><p><b>轮廓</b>: DISPLACEMENT (mm) (<b>总计</b>)</p><p><b>形变</b> <b>总计</b>: (MIN=0, MAX=0.472409)</p><p><b>输出集</b>: <b>子工况</b> 1</p></div>
      <div class="mdi"><div class="cell cw16"><svg width="8" height="10"><path d="M0 8h8v2H0z" fill="#444"/></svg></div><div class="cell cw28"><svg width="12" height="11" viewBox="0 0 12 11"><path d="M.7 1h10.600v9.300H.7zM6.500 1v9M6.500 5h5" fill="none" stroke="#444" stroke-width="1.400"/></svg></div><div class="cell cw16"><svg width="10" height="10"><path d="m0 0 10 10M10 0 0 10" stroke="#444" stroke-width="1.800"/></svg></div></div>
      <svg class="vcube" width="100" height="80" viewBox="1812 217 100 80"><ellipse cx="1862" cy="282" rx="40" ry="9" fill="#5c6472" opacity=".25"/><ellipse cx="1860" cy="284" rx="26" ry="8" fill="#5c6472" opacity=".35"/><path d="m1824 233 23 2 8 52-23-9z" fill="#c3c9d5"/><path d="m1847 235 43-9 5 46-40 15z" fill="#c0c6d2"/><path d="m1824 233 38-8 28 1-43 9z" fill="#d3d8e1"/><path d="m1844 244 12-3 5 34-13 3z" fill="#b4bac8"/><path d="m1824 233 23 2 43-9-28-1zM1824 233l8 45 23 9 40-15-5-46M1847 235l8 52" fill="none" stroke="#777c86" stroke-dasharray="8 2"/><text x="1830" y="266" font-size="20" font-weight="300" fill="#868c98" font-family="Noto Sans CJK SC" transform="matrix(.75 .05 0 1.200 458 -142)">前</text><text x="1860" y="265" font-size="25" font-weight="300" fill="#868c98" font-family="Noto Sans CJK SC" transform="rotate(-8 1872 255)">右</text></svg>
      <div class="navtools">
        <svg width="24" height="9"><circle cx="20" cy="4.500" r="4" fill="#8b92a0"/><path d="m18.500 3 3 3m0-3-3 3" stroke="#fff"/></svg>
        <svg class="mt-2" width="24" height="24" viewBox="0 0 24 24"><path d="M12 2h10v10A10 10 0 1 1 12 2z" fill="url(#glass)" stroke="#6d7482" stroke-width="1.300"/><circle cx="12" cy="12" r="6" fill="url(#glass)" stroke="#6d7482" stroke-width="1.300"/><path d="m8 16-3 3M16 16l3 3" stroke="#6d7482"/></svg>
        <div class="step mt-1"><i class="caret"></i></div><svg width="26" height="2"><path d="M0 1h26" stroke="#9aa1ae"/></svg>
        <svg class="mt-1 mb-2" width="24" height="24" viewBox="0 0 24 24"><path d="M8 23Q2 16 1 12q2-2 5 3L4 4q2-2 3 1l2 7-.5-10q2-2 3 0l1 10 1.500-10q2-1 2.500 1l-.5 10 3-7q2-1 2 1-1 11-6 16z" fill="url(#glass)" stroke="#6d7482" stroke-width="1.200"/></svg>
        <svg width="24" height="24" viewBox="0 0 24 24"><path d="M1 1h10l5 5v15H1z" fill="url(#glass)" stroke="#6d7482" stroke-width="1.200"/><circle cx="15" cy="15" r="4.500" fill="#e6eaf0" stroke="#6d7482" stroke-width="1.200"/><path d="m18 18 5 5" stroke="#555" stroke-width="2.500"/></svg>
        <div class="step mt-1"><i class="caret"></i></div>
        <svg width="24" height="26" viewBox="0 0 24 26"><ellipse cx="12" cy="13" rx="11" ry="4" fill="none" stroke="#6d7482" stroke-width="1.300"/><ellipse cx="12" cy="13" rx="4" ry="11" fill="none" stroke="#6d7482" stroke-width="1.300"/><path d="M9 13h5M11.500 10v5M14 6h4M16 4v4M17 10h4M19 8v4" stroke="#4d5462"/></svg>
        <div class="step mb-1"><i class="caret"></i></div>
        <svg class="mb-1" width="24" height="26" viewBox="0 0 24 26"><path d="M1 9h22v15H1zM1 9l7-7v4l8-1v3" fill="url(#glass)" stroke="#6d7482" stroke-width="1.300"/><path d="M5 13h14v7H5z" fill="#a9b0be" stroke="#6d7482"/></svg>
        <svg class="mt-1" width="18" height="18" viewBox="0 0 18 18"><path d="m1 6 4-5h12v11l-4 5H1zM1 6h12v11M13 6l4-5M1 12h6v5" fill="url(#glass)" stroke="#6d7482" stroke-width="1.200"/></svg>
        <div class="step"><i class="caret"></i></div>
        <svg width="18" height="18" viewBox="0 0 18 18"><path d="M6 9h7l4-4v8l-4 4H6z" fill="#dfe4ec" stroke="#5a6b8a"/><circle cx="6" cy="6" r="5" fill="#a8c0ee" stroke="#5a7fc8"/></svg>
        <div class="step"><i class="caret"></i></div>
        <svg class="mt-1" width="18" height="18" viewBox="0 0 18 18"><circle cx="9" cy="8" r="4" fill="#f2edc4" stroke="#8a8a7a"/><path d="M9 0v3M2 2l2 2M16 2l-2 2M0 8h3M15 8h3M2 14l2-2" stroke="#6d7482"/><circle cx="10" cy="14" r="1.500" fill="#3d7fd0"/><circle cx="16" cy="14" r="1.500" fill="#e06060"/></svg>
        <div class="step tight"><i class="caret"></i></div>
        <svg class="mt-1" width="18" height="18" viewBox="0 0 18 18"><path d="m1 11 8 5 8-5" fill="none" stroke="#8a919e" stroke-width="1.500"/><circle cx="9" cy="6" r="5.500" fill="#d5dce8" stroke="#5a6b8a"/><path d="M12 12h5v5h-5z" fill="#d05050"/></svg>
        <div class="step tight mt-1"><i class="caret"></i></div>
        <svg class="mt-auto mb-1" width="24" height="9"><circle cx="20" cy="4.500" r="3.500" fill="none" stroke="#8b92a0" stroke-width="1.500"/><path d="M18 4.500h4" stroke="#8b92a0"/></svg>
      </div>
      <svg class="gbox" width="64" height="64" viewBox="0 0 64 64"><path d="M0 0h64v64H0z" fill="#fff"/><text x="32" y="27" text-anchor="middle" font-family="Liberation Sans" font-size="27" fill="#333399">G</text><path d="M24 29q8 3 16 0v17h5l-13 9-13-9h5z" fill="#333399"/></svg>
    </div>
    <div class="docbar"><button class="cw32 d-flex align-items-center justify-content-center" aria-label="主页"><svg width="20" height="20"><use href="#home"/></svg></button>
      <a href="#" class="doctab"><span>10x500 圆棒.ipt</span><svg width="11" height="11"><path d="m0 0 11 11M11 0 0 11" stroke="#888" stroke-width="2"/></svg></a>
      <button class="ms-auto me-1" aria-label="文档列表"><svg width="18" height="15"><path d="M0 1h18M0 7.500h18M0 14h18" stroke="#555" stroke-width="2"/></svg></button></div>
  </div>
</main>

<div class="status"><span>就绪</span><span class="num ms-auto">1</span><span class="num">1</span></div>

<footer class="taskbar">
  <button class="tcell" aria-label="开始"><svg width="17" height="16" viewBox="0 0 17 16"><path d="m0 2 7-1v6.500H0zM8 1l9-1v7.500H8zM0 8.500h7V15l-7-1zM8 8.500h9V16l-9-1z"/></svg></button>
  <button class="tcell" aria-label="搜索"><svg width="20" height="20" viewBox="0 0 20 20"><circle cx="12.500" cy="7.500" r="6.500" fill="none" stroke="#000" stroke-width="1.500"/><path d="m8 12-7 7.500" stroke="#000" stroke-width="1.500"/></svg></button>
  <button class="tcell" aria-label="Cortana"><svg width="20" height="20"><circle cx="10" cy="10" r="8.500" fill="none" stroke="#000" stroke-width="2.500"/></svg></button>
  <button class="tcell ps-1" aria-label="Edge"><svg width="30" height="30" viewBox="0 0 30 30"><circle cx="15" cy="15" r="15" fill="#0c6cc4"/><path d="M0 15C0 5 7 0 15 0s15 6 15 12c0 5-5 8-9 7-3-1-1-3-2-6-1-4-5-6-9-6-5 0-9 4-10 8z" fill="url(#edgeA)"/><path d="M11 14c-2 6 3 13 10 12 4 0 6-2 8-4l-3 5q-5 4-12 3c-7-2-9-10-3-16z" fill="#0b4f98"/><path d="M19 13c1 3-1 5 2 6 3 2 7 0 9-3v6q-3 2-7 2c-7 0-11-6-4-11z" fill="#eee"/></svg></button>
  <button class="tcell ps-1" aria-label="微信"><svg width="30" height="26"><use href="#wechat"/></svg></button>
  <button class="task front ms-1"><svg width="28" height="28" viewBox="0 0 28 28"><path d="M0 0h28v28H0z" fill="#f7d3b0"/><path d="M8 2h12v4l-3 1v10l3 2v3H8v-3l3-2V7L8 6z" fill="#c87a2b"/><text x="14" y="27" font-size="6" font-weight="700" fill="#e06a10" font-family="Liberation Sans">PRO</text></svg><span>Autodesk Invento...</span></button>
  <button class="task back"><svg width="18" height="26" viewBox="0 0 18 26"><path d="M1 1h15l1 21H6z" fill="#f3cf6a"/><path d="m1 1 6 4v20l-5-3z" fill="#fbe6a2"/></svg><span>屏幕截图</span></button>
  <div class="tray ms-auto">
    <div class="slot"><svg width="12" height="8"><path d="m1 7 5-5 5 5" fill="none" stroke="#000" stroke-width="1.500"/></svg></div>
    <div class="slot"><svg width="20" height="17"><use href="#wechat"/></svg></div>
    <div class="slot"><svg width="20" height="20" viewBox="0 0 20 20"><rect width="20" height="20" rx="3" fill="#1f86d8"/><path d="m10 2 7 2v6q0 5-7 8-7-3-7-8V4z" fill="#6fa9d4" stroke="#e8f2fa" stroke-width="1.500"/><path d="m10 13 3 4 6-9" fill="none" stroke="#f5e52a" stroke-width="2.500"/></svg></div>
    <div class="slot"><svg width="18" height="18" viewBox="0 0 18 18"><rect width="18" height="18" rx="4" fill="#0a8cf5"/><path d="m5 3 8 5-2 2 1 1-4 5 1-4q-3-2-2-4-2-2-2-5z" fill="#fff"/></svg></div>
    <div class="slot"><svg width="20" height="15" viewBox="0 0 20 15"><path d="M6 4.500h12v9H5V9" fill="none" stroke="#000"/><path d="M6 6h11v6H6zM18.500 7H20v4h-1.500z"/><path d="M1 2h5v3q0 2-2.500 2T1 5zM2 0v2M5 0v2M3.500 7v6H6" fill="none" stroke="#000"/></svg></div>
    <div class="slot"><svg width="21" height="18" viewBox="0 0 21 18"><path d="M1 6h3l4-4v14l-4-4H1z" fill="none" stroke="#000" stroke-width="1.200"/><path d="M11 7q2 2 0 4" fill="none" stroke="#000" stroke-width="1.200"/><path d="M14 4q4 5 0 10M17 1q6 8 0 16" fill="none" stroke="#aaa" stroke-width="1.200"/></svg></div>
    <div class="slot"><span class="ime">中</span></div>
    <div class="clock">8:08<br>2022/10/31</div>
    <svg class="ms-3" width="30" height="30" viewBox="0 0 30 30"><path d="M0 1h20v15h-6l-4 4v-4H0z"/><path d="M4 5h12M4 8.500h12M4 12h12" stroke="#eee" stroke-width="1.300"/><circle cx="19" cy="20" r="9.500" fill="#d4d4d4" stroke="#888"/><text x="15" y="25" font-size="14" font-weight="600" font-family="Noto Sans">1</text></svg>
  </div>
  <div class="peek"></div>
</footer>

<script>
(function(){
  var c=[[396,295],[475,308],[560,330],[640,352],[735,382],[870,431],[973,471],[1140,534],[1240,574],[1402,638]], R=18, seed=7;
  function rnd(){seed=(seed*16807)%2147483647;return seed/2147483647-.5}
  function slopeAt(i){var a=c[Math.max(0,i-1)],b=c[Math.min(c.length-1,i+1)];return (b[1]-a[1])/(b[0]-a[0])}
  function mid(x){var i=0;while(i<c.length-2&&x>c[i+1][0])i++;
    var h=c[i+1][0]-c[i][0],t=(x-c[i][0])/h,t2=t*t,t3=t2*t;
    return (2*t3-3*t2+1)*c[i][1]+(t3-2*t2+t)*h*slopeAt(i)+(3*t2-2*t3)*c[i+1][1]+(t3-t2)*h*slopeAt(i+1)}
  function at(x,o){var s=(mid(x+1)-mid(x-1))/2,n=Math.sqrt(1+s*s),k=o*(.9+.07*Math.min(1,(x-396)/300));return [x-s/n*k,mid(x)+k/n]}
  function f(p){return p[0].toFixed(1)+' '+p[1].toFixed(1)}
  function line(o,a,b){var d='';for(var x=a;x<=b;x+=8)d+=(d?'L':'M')+f(at(x,o));return d}
  var end=1404,body=line(-R,402,end)+'L'+line(R,404,end).slice(1).split('L').reverse().join('L')+'Q386 296 '+f(at(402,-R))+'Z';
  function set(id,d){document.getElementById(id).setAttribute('d',d)}
  set('rod',body);set('shade',line(R-5,404,1396));set('rimTop',line(-R+1,408,1396));set('rimBot',line(R-1,408,1396));
  var rows=11,cols=200,g=[],d='';
  for(var i=0;i<=cols;i++){g[i]=[];for(var j=0;j<=rows;j++){
    var edge=j==0||j==rows?0:.9,th=(-.5+(j+rnd()*edge)/rows)*Math.PI;
    g[i][j]=at(398+i*5+(j%2)*2.500+rnd()*3.500,R*Math.sin(th))}}
  for(i=0;i<cols;i++)for(j=0;j<rows;j++){
    d+='M'+f(g[i+1][j])+'L'+f(g[i][j])+'L'+f(g[i][j+1]);
    d+=rnd()>0?'M'+f(g[i][j])+'L'+f(g[i+1][j+1]):'M'+f(g[i+1][j])+'L'+f(g[i][j+1])}
  set('net',d);
})();
</script>
</body>
</html>
